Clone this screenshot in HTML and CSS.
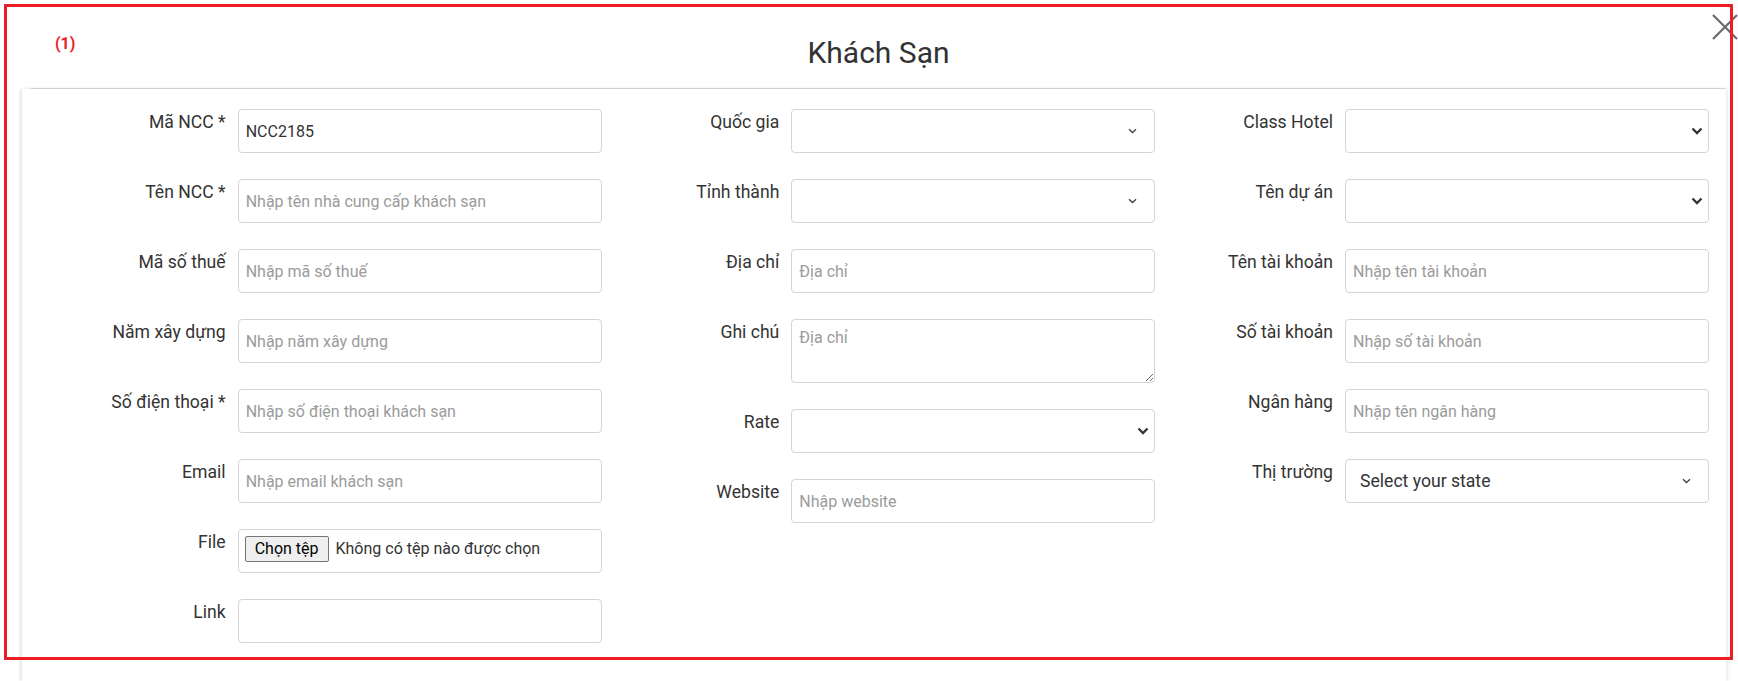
FILE: index.html
```html
<!DOCTYPE html>
<html lang="vi">
<head>
<meta charset="utf-8">
<title>Khách Sạn</title>
<link rel="stylesheet" href="styles.css">
</head>
<body>
<div class="page">
  <div class="modal">
    <div class="modal-header">
      <h2 class="modal-title">Khách Sạn</h2>
    </div>
    <div class="modal-body">
      <div class="form-grid">
        <div class="form-col">
          <div class="form-row"><label class="form-label">Mã NCC *</label><input class="form-control" type="text" value="NCC2185"></div>
          <div class="form-row"><label class="form-label">Tên NCC *</label><input class="form-control" type="text" placeholder="Nhập tên nhà cung cấp khách sạn"></div>
          <div class="form-row"><label class="form-label">Mã số thuế</label><input class="form-control" type="text" placeholder="Nhập mã số thuế"></div>
          <div class="form-row"><label class="form-label">Năm xây dựng</label><input class="form-control" type="text" placeholder="Nhập năm xây dựng"></div>
          <div class="form-row"><label class="form-label">Số điện thoại *</label><input class="form-control" type="text" placeholder="Nhập số điện thoại khách sạn"></div>
          <div class="form-row"><label class="form-label">Email</label><input class="form-control" type="text" placeholder="Nhập email khách sạn"></div>
          <div class="form-row"><label class="form-label">File</label>
            <div class="form-control file-box"><button class="file-btn" type="button">Chọn tệp</button><span class="file-name">Không có tệp nào được chọn</span></div>
          </div>
          <div class="form-row"><label class="form-label">Link</label><input class="form-control" type="text"></div>
        </div>

        <div class="form-col">
          <div class="form-row"><label class="form-label">Quốc gia</label>
            <div class="select-wrap"><select class="form-control select"><option></option></select>
              <svg class="chev-thin" width="9" height="6" viewBox="0 0 9 6"><path d="M1 1.2 L4.5 4.5 L8 1.2" fill="none" stroke="#444" stroke-width="1.4"/></svg></div>
          </div>
          <div class="form-row"><label class="form-label">Tỉnh thành</label>
            <div class="select-wrap"><select class="form-control select"><option></option></select>
              <svg class="chev-thin" width="9" height="6" viewBox="0 0 9 6"><path d="M1 1.2 L4.5 4.5 L8 1.2" fill="none" stroke="#444" stroke-width="1.4"/></svg></div>
          </div>
          <div class="form-row"><label class="form-label">Địa chỉ</label><input class="form-control" type="text" placeholder="Địa chỉ"></div>
          <div class="form-row"><label class="form-label">Ghi chú</label><textarea class="form-control textarea" placeholder="Địa chỉ"></textarea></div>
          <div class="form-row"><label class="form-label">Rate</label>
            <div class="select-wrap"><select class="form-control select"><option></option></select>
              <svg class="chev-bold" width="12" height="8" viewBox="0 0 12 8"><path d="M1.5 1.5 L6 6 L10.5 1.5" fill="none" stroke="#333" stroke-width="2.3"/></svg></div>
          </div>
          <div class="form-row"><label class="form-label">Website</label><input class="form-control" type="text" placeholder="Nhập website"></div>
        </div>

        <div class="form-col">
          <div class="form-row"><label class="form-label">Class Hotel</label>
            <div class="select-wrap"><select class="form-control select"><option></option></select>
              <svg class="chev-bold" width="12" height="8" viewBox="0 0 12 8"><path d="M1.5 1.5 L6 6 L10.5 1.5" fill="none" stroke="#333" stroke-width="2.3"/></svg></div>
          </div>
          <div class="form-row"><label class="form-label">Tên dự án</label>
            <div class="select-wrap"><select class="form-control select"><option></option></select>
              <svg class="chev-bold" width="12" height="8" viewBox="0 0 12 8"><path d="M1.5 1.5 L6 6 L10.5 1.5" fill="none" stroke="#333" stroke-width="2.3"/></svg></div>
          </div>
          <div class="form-row"><label class="form-label">Tên tài khoản</label><input class="form-control" type="text" placeholder="Nhập tên tài khoản"></div>
          <div class="form-row"><label class="form-label">Số tài khoản</label><input class="form-control" type="text" placeholder="Nhập số tài khoản"></div>
          <div class="form-row"><label class="form-label">Ngân hàng</label><input class="form-control" type="text" placeholder="Nhập tên ngân hàng"></div>
          <div class="form-row"><label class="form-label">Thị trường</label>
            <div class="select-wrap"><select class="form-control select select-state"><option>Select your state</option></select>
              <svg class="chev-thin" width="9" height="6" viewBox="0 0 9 6"><path d="M1 1.2 L4.5 4.5 L8 1.2" fill="none" stroke="#444" stroke-width="1.4"/></svg></div>
          </div>
        </div>
      </div>
    </div>
  </div>

  <button class="close-btn" type="button" aria-label="Close">
    <svg width="28" height="28" viewBox="0 0 28 28"><path d="M2 2 L26 26 M26 2 L2 26" stroke="#6a6a6a" stroke-width="2.2" fill="none"/></svg>
  </button>

  <div class="annot-box"></div>
  <span class="annot-label">(1)</span>
</div>
</body>
</html>
```

FILE: styles.css
```css
* { box-sizing: border-box; }

html, body {
  margin: 0;
  padding: 0;
  height: 100%;
  overflow: hidden;
  background: #fff;
}

body {
  font-family: Roboto, "Noto Sans", Arial, sans-serif;
  color: #333;
}

.page {
  position: relative;
  height: 100vh;
  overflow: hidden;
}

.modal {
  margin-left: 22px;
  width: 1704px;
  height: 100%;
  display: flex;
  flex-direction: column;
}

.modal-header {
  margin-left: 9px;
  padding: 35px 0 17px;
  border-bottom: 1px solid #dcdfe3;
}

.modal-title {
  margin: 0;
  font-size: 30px;
  line-height: 36px;
  font-weight: 400;
  text-align: center;
  color: #333;
}

.modal-body {
  flex: 1;
  padding: 20px 17px 0 26px;
  box-shadow: -2px 0 3px rgba(0, 0, 0, 0.10), 2px 0 3px rgba(0, 0, 0, 0.08);
  background: #fff;
}

.form-grid {
  display: grid;
  grid-template-columns: repeat(3, 1fr);
}

.form-col {
  display: flex;
  flex-direction: column;
}

.form-row {
  display: grid;
  grid-template-columns: 1fr 364px;
  column-gap: 12px;
  margin-bottom: 26px;
  align-items: start;
}

.form-label {
  text-align: right;
  font-size: 17.6px;
  line-height: 26.4px;
  color: #333;
  white-space: nowrap;
}

.form-control {
  display: block;
  width: 100%;
  height: 44px;
  padding: 0 7px;
  border: 1px solid #d3d5d8;
  border-radius: 4px;
  background: #fff;
  font-family: Roboto, "Noto Sans", Arial, sans-serif;
  font-size: 16px;
  color: #333;
  outline: none;
}

.form-control::placeholder {
  color: #9b9b9b;
  opacity: 1;
}

.textarea {
  height: 64px;
  padding: 6px 7px;
  line-height: 24px;
  resize: both;
}

.select-wrap {
  position: relative;
}

.select {
  appearance: none;
  -webkit-appearance: none;
  padding: 0 17px;
  color: #333;
}

.select-state {
  padding: 0 14px;
  font-size: 17.6px;
  color: #333;
}

.chev-thin {
  position: absolute;
  right: 18px;
  top: 19px;
  pointer-events: none;
}

.chev-bold {
  position: absolute;
  right: 6px;
  top: 18px;
  pointer-events: none;
}

.file-box {
  display: flex;
  align-items: flex-start;
  padding: 6px 6px 0;
}

.file-btn {
  height: 26px;
  padding: 0 9px;
  background: #efefef;
  border: 1px solid #767676;
  border-radius: 2px;
  font-family: Roboto, "Noto Sans", Arial, sans-serif;
  font-size: 16px;
  color: #000;
  line-height: 24px;
}

.file-name {
  margin-left: 7px;
  font-size: 16px;
  line-height: 26px;
  color: #333;
}

.close-btn {
  position: absolute;
  left: 1711px;
  top: 13px;
  width: 28px;
  height: 28px;
  padding: 0;
  border: 0;
  background: transparent;
}

.close-btn svg {
  display: block;
}

.annot-box {
  position: absolute;
  left: 4px;
  top: 4px;
  width: 1729px;
  height: 656px;
  border: 3px solid #ee1c25;
  pointer-events: none;
}

.annot-label {
  position: absolute;
  left: 55px;
  top: 33px;
  font-size: 16px;
  line-height: 22px;
  font-weight: 700;
  color: #ee1c25;
}
```
